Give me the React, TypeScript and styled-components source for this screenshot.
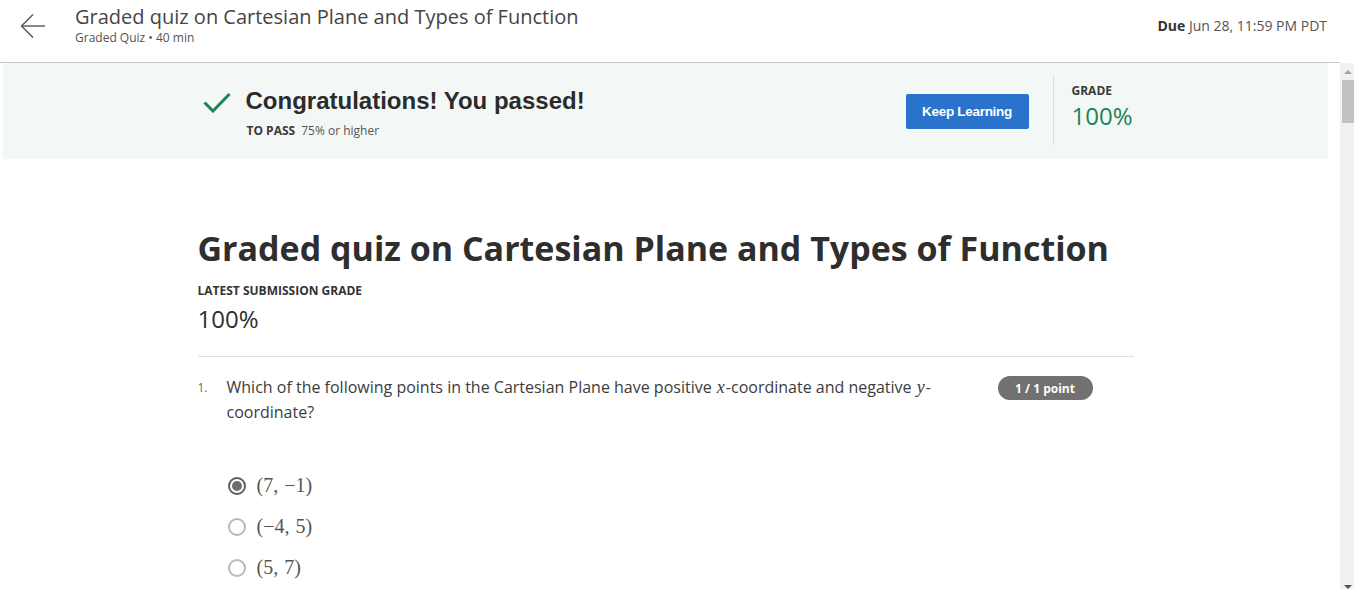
import React from "react";
import styled, { createGlobalStyle } from "styled-components";

const GlobalStyle = createGlobalStyle`
  * { box-sizing: border-box; }
  html, body { margin: 0; padding: 0; overflow: hidden; background: #fff; }
  body { font-family: "Open Sans", "Liberation Sans", Arial, sans-serif; color: #1f1f1f; }
`;

const Page = styled.div`
  display: flex;
  flex-direction: column;
  height: 589px;
  width: 1354px;
`;

const Header = styled.header`
  display: flex;
  align-items: flex-start;
  height: 63px;
  margin-right: 14px;
  padding: 0 13px 0 20px;
  border-bottom: 1px solid #c8c8c8;
  flex-shrink: 0;
`;

const BackButton = styled.button`
  width: 26px;
  height: 26px;
  margin-top: 13px;
  margin-right: 29px;
  padding: 0;
  border: 0;
  background: transparent;
  display: flex;
  align-items: center;
  justify-content: center;
`;

const TitleBlock = styled.div`
  padding-top: 4px;
`;

const HeaderTitle = styled.div`
  font-size: 20px;
  line-height: 26px;
  color: #454545;
`;

const HeaderSub = styled.div`
  font-size: 12px;
  line-height: 16px;
  color: #555;
`;

const Due = styled.div`
  margin-left: auto;
  padding-top: 17px;
  font-size: 14px;
  line-height: 18px;
  color: #555;
  b { font-weight: 700; color: #333; }
`;

const Body = styled.div`
  display: flex;
  flex: 1;
  min-height: 0;
`;

const Scroller = styled.main`
  flex: 1;
  overflow: hidden;
  padding: 0 12px 0 3px;
`;

const Banner = styled.section`
  height: 96px;
  background: #f3f8f6;
`;

const Container = styled.div`
  width: 936px;
  margin: 0 auto;
`;

const BannerInner = styled(Container)`
  display: flex;
  align-items: center;
  height: 100%;
`;

const PassGroup = styled.div`
  display: flex;
  align-items: flex-start;
  padding-left: 5px;
  margin-top: 3px;
`;

const CheckIcon = styled.svg`
  width: 28px;
  height: 22px;
  margin-top: 4px;
  margin-right: 15px;
`;

const PassTitle = styled.div`
  font-family: "Liberation Sans", Arial, sans-serif;
  font-weight: 700;
  font-size: 24px;
  line-height: 28px;
  color: #2b2b2b;
`;

const PassSub = styled.div`
  margin-top: 8px;
  font-size: 12px;
  line-height: 16px;
  color: #555;
  padding-left: 1px;
  b { font-weight: 700; color: #3a3a3a; margin-right: 6px; }
`;

const KeepButton = styled.button`
  margin-left: auto;
  margin-right: 24px;
  margin-top: 1px;
  width: 123px;
  height: 35px;
  border: 0;
  border-radius: 2px;
  background: #2a73cc;
  color: #fff;
  font-family: "Liberation Sans", Arial, sans-serif;
  font-weight: 700;
  font-size: 13.5px;
  letter-spacing: -0.3px;
`;

const GradeBox = styled.div`
  align-self: center;
  height: 69px;
  width: 81px;
  margin-top: -1px;
  border-left: 1px solid #dcdcdc;
  padding: 7px 0 0 18px;
`;

const GradeLabel = styled.div`
  font-size: 12px;
  line-height: 16px;
  font-weight: 700;
  color: #3a3a3a;
`;

const GradeValue = styled.div`
  font-size: 24px;
  line-height: 34px;
  color: #1f8354;
`;

const MainTitle = styled.h1`
  margin: 66px 0 0;
  font-size: 34px;
  line-height: 46px;
  font-weight: 700;
  color: #2e2e2e;
`;

const SmallLabel = styled.div`
  margin-top: 12px;
  font-size: 12px;
  line-height: 16px;
  font-weight: 700;
  color: #333;
`;

const BigGrade = styled.div`
  margin-top: 6px;
  font-size: 24px;
  line-height: 28px;
  color: #2e2e2e;
`;

const Divider = styled.hr`
  margin: 23px 0 0;
  border: 0;
  border-top: 1px solid #e2e2e2;
`;

const QuestionRow = styled.div`
  display: flex;
  align-items: flex-start;
  margin-top: 18px;
`;

const QNum = styled.div`
  width: 29px;
  flex-shrink: 0;
  font-size: 12px;
  line-height: 25px;
  color: #666;
`;

const QBody = styled.div`
  flex: 1;
`;

const QText = styled.div`
  font-size: 16px;
  line-height: 25px;
  color: #3c3c3c;
  padding-right: 20px;
`;

const MathVar = styled.span`
  font-family: "Liberation Serif", "DejaVu Serif", serif;
  font-style: italic;
  font-size: 18px;
  line-height: 1;
  padding: 0 1px;
`;

const PointBadge = styled.div`
  flex-shrink: 0;
  margin: 1px 41px 0 0;
  width: 95px;
  height: 24px;
  border-radius: 12px;
  background: #717171;
  color: #fff;
  font-size: 12px;
  font-weight: 700;
  display: flex;
  align-items: center;
  justify-content: center;
`;

const Options = styled.div`
  margin-top: 40px;
  display: flex;
  flex-direction: column;
`;

const OptionRow = styled.label`
  display: flex;
  align-items: center;
  height: 41px;
  padding-left: 1px;
`;

const Radio = styled.span<{ $checked?: boolean }>`
  width: 18px;
  height: 18px;
  border-radius: 50%;
  border: 2px solid ${(p) => (p.$checked ? "#5e5e5e" : "#b8b8b8")};
  display: flex;
  align-items: center;
  justify-content: center;
  margin-right: 11px;
  &::after {
    content: "";
    width: 10px;
    height: 10px;
    border-radius: 50%;
    background: ${(p) => (p.$checked ? "#6e6e6e" : "transparent")};
  }
`;

const MathText = styled.span`
  font-family: "Liberation Serif", "DejaVu Serif", serif;
  font-size: 20px;
  color: #555;
  word-spacing: 1px;
`;

const ScrollTrack = styled.div`
  width: 14px;
  flex-shrink: 0;
  background: #f1f1f1;
  display: flex;
  flex-direction: column;
  align-items: flex-end;
`;

const ArrowBox = styled.div<{ $down?: boolean }>`
  width: 12px;
  height: ${(p) => (p.$down ? "13px" : "17px")};
  display: flex;
  justify-content: center;
  align-items: ${(p) => (p.$down ? "flex-end" : "center")};
  margin-top: ${(p) => (p.$down ? "auto" : "0")};
  &::before {
    content: "";
    border-left: 4px solid transparent;
    border-right: 4px solid transparent;
    ${(p) =>
      p.$down
        ? "border-top: 4px solid #505050;"
        : "border-bottom: 4px solid #a3a3a3;"}
  }
`;

const Thumb = styled.div`
  width: 12px;
  height: 43px;
  background: #c1c1c1;
`;

const options = [
  { label: "(7, −1)", checked: true },
  { label: "(−4, 5)", checked: false },
  { label: "(5, 7)", checked: false },
];

export default function App() {
  return (
    <>
      <GlobalStyle />
      <Page>
        <Header>
          <BackButton aria-label="Back">
            <svg width="26" height="26" viewBox="0 0 26 26" fill="none">
              <path d="M25 13H2" stroke="#555" strokeWidth="1.4" />
              <path d="M13 1.5L1.5 13L13 24.5" stroke="#555" strokeWidth="1.4" />
            </svg>
          </BackButton>
          <TitleBlock>
            <HeaderTitle>Graded quiz on Cartesian Plane and Types of Function</HeaderTitle>
            <HeaderSub>Graded Quiz • 40 min</HeaderSub>
          </TitleBlock>
          <Due>
            <b>Due</b> Jun 28, 11:59 PM PDT
          </Due>
        </Header>
        <Body>
          <Scroller>
            <Banner>
              <BannerInner>
                <PassGroup>
                  <CheckIcon viewBox="0 0 28 22" fill="none">
                    <path d="M1.5 11.5L10 20L26.5 3" stroke="#1f8354" strokeWidth="3" />
                  </CheckIcon>
                  <div>
                    <PassTitle>Congratulations! You passed!</PassTitle>
                    <PassSub>
                      <b>TO PASS</b>75% or higher
                    </PassSub>
                  </div>
                </PassGroup>
                <KeepButton>Keep Learning</KeepButton>
                <GradeBox>
                  <GradeLabel>GRADE</GradeLabel>
                  <GradeValue>100%</GradeValue>
                </GradeBox>
              </BannerInner>
            </Banner>
            <Container>
              <MainTitle>Graded quiz on Cartesian Plane and Types of Function</MainTitle>
              <SmallLabel>LATEST SUBMISSION GRADE</SmallLabel>
              <BigGrade>100%</BigGrade>
              <Divider />
              <QuestionRow>
                <QNum>1.</QNum>
                <QBody>
                  <QText>
                    {"Which of the following points in the Cartesian Plane have positive "}
                    <MathVar>x</MathVar>
                    {"-coordinate and negative "}
                    <MathVar>y</MathVar>
                    {"-"}
                    {"coordinate?"}
                  </QText>
                  <Options>
                    {options.map((o) => (
                      <OptionRow key={o.label}>
                        <Radio $checked={o.checked} />
                        <MathText>{o.label}</MathText>
                      </OptionRow>
                    ))}
                  </Options>
                </QBody>
                <PointBadge>1 / 1 point</PointBadge>
              </QuestionRow>
            </Container>
          </Scroller>
          <ScrollTrack>
            <ArrowBox />
            <Thumb />
            <ArrowBox $down />
          </ScrollTrack>
        </Body>
      </Page>
    </>
  );
}
